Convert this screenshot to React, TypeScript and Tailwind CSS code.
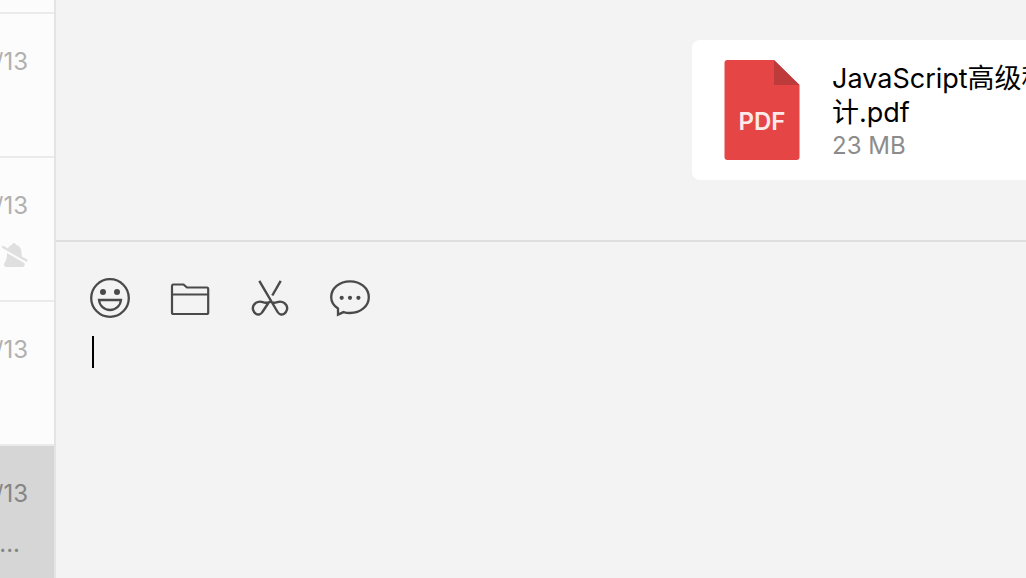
import { useState } from "react";

interface Chat {
  id: number;
  date: string;
  muted?: boolean;
  preview?: string;
  active?: boolean;
}

const chats: Chat[] = [
  { id: 1, date: "/13" },
  { id: 2, date: "/13", muted: true },
  { id: 3, date: "/13" },
  { id: 4, date: "/13", preview: "...", active: true },
];

function MutedIcon() {
  return (
    <svg width="26" height="26" viewBox="0 0 26 26" aria-hidden="true">
      <path
        d="M12 1c1 0 1.600.8 2 1.700 3.400 1 5.500 3.600 5.500 7.300 0 5 .6 7.500 2.500 10 1.400 2 .7 5-1.500 5h-16C2.300 25 1.300 22.500 2.500 21c1.800-2.300 2.500-5 2.500-10 0-4.200 1.800-7.200 5-8.300C10.400 1.800 11 1 12 1z"
        fill="#dfdfdf"
      />
      <path d="M0 5.800 25 20.300" stroke="#fcfcfc" strokeWidth="4" />
      <path d="M1 5 24.500 18.500" stroke="#dfdfdf" strokeWidth="2.400" strokeLinecap="round" />
    </svg>
  );
}

function SmileIcon() {
  return (
    <svg width="40" height="40" viewBox="0 0 40 40" fill="none" stroke="#4a4a4a" strokeWidth="2.300">
      <circle cx="20" cy="20" r="18.800" />
      <circle cx="13" cy="14" r="3" fill="#4a4a4a" stroke="none" />
      <circle cx="27" cy="14" r="3" fill="#4a4a4a" stroke="none" />
      <path d="M9 22h22c-.6 5.800-5.200 10-11 10S9.600 27.800 9 22z" />
    </svg>
  );
}

function FolderIcon() {
  return (
    <svg width="40" height="40" viewBox="0 0 40 40" fill="none" stroke="#4a4a4a" strokeWidth="2.200" strokeLinejoin="round">
      <path d="M3 6.500h10.500l3.500 3H37a1.500 1.500 0 0 1 1.200 1.500v23.500a1.500 1.500 0 0 1-1.500 1.500H3.500A1.500 1.500 0 0 1 2 34.500V8A1.500 1.500 0 0 1 3 6.500z" />
      <path d="M2 16.500h36" />
    </svg>
  );
}

function ScissorsIcon() {
  return (
    <svg width="40" height="40" viewBox="0 0 40 40" fill="none" stroke="#4a4a4a" strokeWidth="2.400" strokeLinejoin="round">
      <path d="M9.300 2.800 27.600 34c1.400 2.400 4.200 3.200 6.600 1.700 2.800-1.800 3.800-5.700 2.100-8.600-1.900-3.100-5.700-4.100-9-3-2.300.8-4.800.9-7.300-.4-2.500 1.300-5 1.200-7.300.4-3.300-1.100-7.100-.1-9 3-1.700 2.900-.7 6.800 2.100 8.600 2.400 1.500 5.200.7 6.600-1.700L19 24" />
      <path d="M30.700 2.800 22.300 17.500" />
    </svg>
  );
}

function HistoryIcon() {
  return (
    <svg width="40" height="40" viewBox="0 0 40 40" fill="none" stroke="#4a4a4a" strokeWidth="2.300" strokeLinejoin="miter">
      <path d="M8 30.500C3.700 27.600 1.200 23.600 1.200 19.200 1.200 10.400 9.400 3.300 20 3.300s18.800 7.100 18.800 15.900S30.600 35 20 35c-2.300 0-4.500-.3-6.500-.9L8 36.600z" />
      <g fill="#4a4a4a" stroke="none">
        <circle cx="11.700" cy="19.800" r="2.100" />
        <circle cx="20" cy="19.800" r="2.100" />
        <circle cx="28.400" cy="19.800" r="2.100" />
      </g>
    </svg>
  );
}

const tools = [
  { label: "表情", Icon: SmileIcon },
  { label: "文件", Icon: FolderIcon },
  { label: "截图", Icon: ScissorsIcon },
  { label: "聊天记录", Icon: HistoryIcon },
];

function ChatRow({ chat }: { chat: Chat }) {
  return (
    <li className={chat.active ? "bg-[#d6d6d6]" : "bg-[#fcfcfc]"}>
      <button
        type="button"
        className={`flex h-36 w-full flex-col items-end overflow-hidden border-t-2 border-[#ebebeb] pt-8 text-2xl ${
          chat.active ? "text-[#858585]" : "text-[#b0b0b0]"
        }`}
      >
        <span className="pr-[26px]">{chat.date}</span>
        {chat.muted && (
          <span className="pt-5 pr-[26px]">
            <MutedIcon />
          </span>
        )}
        {chat.preview && <span className="pt-[18px] pr-[34px]">{chat.preview}</span>}
      </button>
    </li>
  );
}

function FileCard() {
  return (
    <article className="-mr-[126px] flex h-[140px] w-[460px] shrink-0 items-center rounded-lg bg-white px-8">
      <div className="relative h-[100px] w-19 shrink-0">
        <svg width="76" height="100" viewBox="0 0 76 100" aria-hidden="true">
          <path d="M3 0h47l25.500 25V97a3 3 0 0 1-3 3H3.500a3 3 0 0 1-3-3V3a3 3 0 0 1 3-3z" fill="#e64545" />
          <path d="M50 0 75.500 25H50z" fill="#be3b3c" />
        </svg>
        <span className="absolute inset-x-0 top-12 text-center text-2xl leading-7 font-semibold text-[#fbeaea]">
          PDF
        </span>
      </div>
      <div className="ml-8 w-[274px] pt-1">
        <h2 className="text-[27px] leading-[34px] break-all text-black">
          JavaScript高级程序设计.pdf
        </h2>
        <p className="text-2xl text-[#8c8c8c]">23 MB</p>
      </div>
    </article>
  );
}

export default function App() {
  const [message, setMessage] = useState("");

  return (
    <div className="flex h-screen overflow-hidden bg-[#f3f3f3] font-[Inter,'Noto_Sans_CJK_SC',sans-serif]">
      <aside className="w-14 shrink-0 overflow-hidden border-r-2 border-[#e4e4e4] bg-[#fcfcfc] pt-3">
        <ul>
          {chats.map((chat) => (
            <ChatRow key={chat.id} chat={chat} />
          ))}
        </ul>
      </aside>

      <main className="flex min-w-0 flex-1 flex-col">
        <section className="flex h-60 shrink-0 justify-end overflow-hidden pt-10">
          <FileCard />
        </section>

        <section className="flex flex-1 flex-col border-t-2 border-[#dedede] pt-9">
          <div className="flex gap-10 px-[34px]">
            {tools.map(({ label, Icon }) => (
              <button key={label} type="button" aria-label={label} title={label}>
                <Icon />
              </button>
            ))}
          </div>
          <div className="relative mt-[18px] flex-1">
            <textarea
              aria-label="消息"
              value={message}
              onChange={(event) => setMessage(event.target.value)}
              className="peer h-full w-full resize-none bg-transparent px-9 text-[28px] leading-8 outline-none"
            />
            {!message && (
              <span className="pointer-events-none absolute top-0 left-9 h-8 w-0.5 bg-black peer-focus:hidden" />
            )}
          </div>
        </section>
      </main>
    </div>
  );
}
